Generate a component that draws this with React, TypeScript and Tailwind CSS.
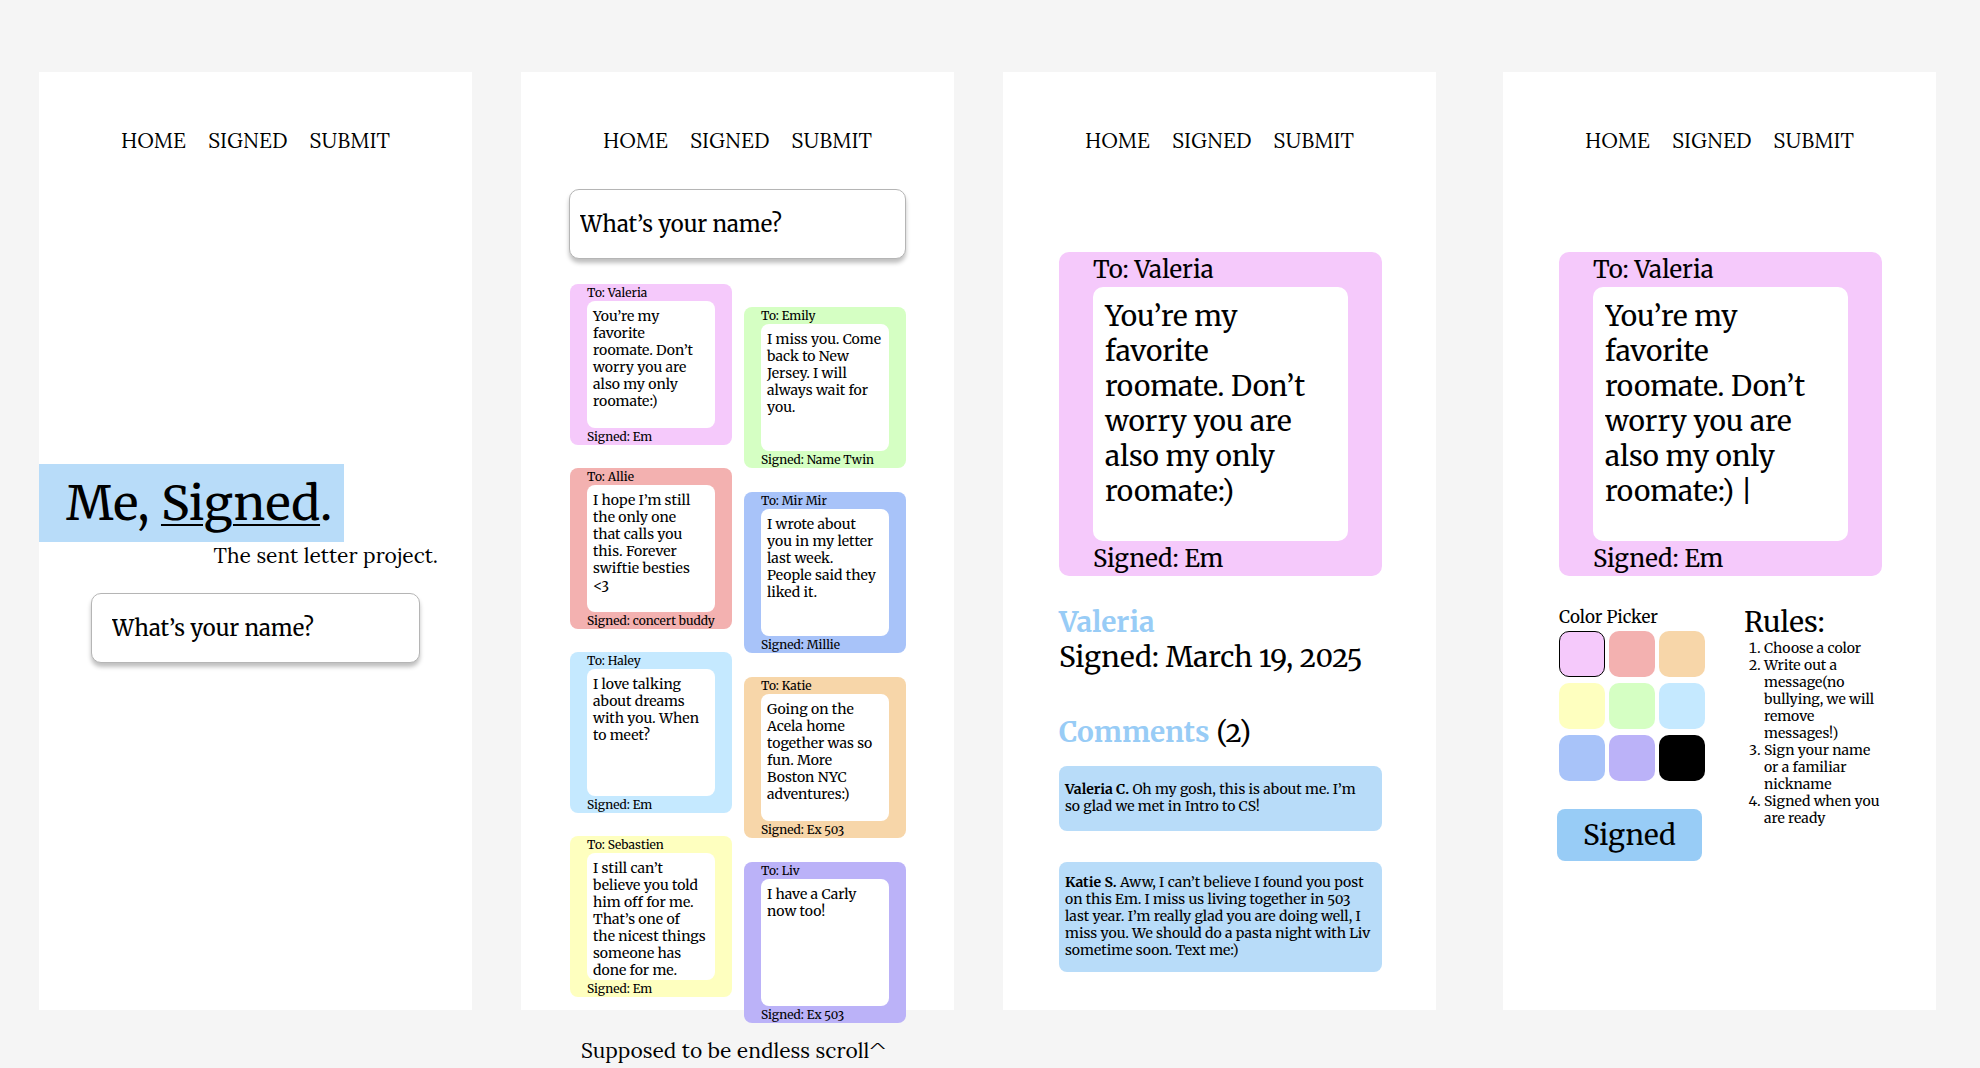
import { useState } from "react";
import type { ReactNode } from "react";

const inks = {
  pink: "bg-[#f5c9fb]",
  red: "bg-[#f3b1b0]",
  orange: "bg-[#f7d6a9]",
  yellow: "bg-[#feffbf]",
  green: "bg-[#d5ffc3]",
  sky: "bg-[#c5e9ff]",
  blue: "bg-[#a8c3f9]",
  purple: "bg-[#bbb2f8]",
  black: "bg-black",
};

type Ink = keyof typeof inks;
type Letter = { ink: Ink; to: string; from: string; text: string };

const leftLetters: Letter[] = [
  { ink: "pink", to: "Valeria", from: "Em", text: "You’re my\nfavorite\nroomate. Don’t\nworry you are\nalso my only\nroomate:)" },
  { ink: "red", to: "Allie", from: "concert buddy", text: "I hope I’m still\nthe only one\nthat calls you\nthis. Forever\nswiftie besties\n<3" },
  { ink: "sky", to: "Haley", from: "Em", text: "I love talking\nabout dreams\nwith you. When\nto meet?" },
  { ink: "yellow", to: "Sebastien", from: "Em", text: "I still can’t\nbelieve you told\nhim off for me.\nThat’s one of\nthe nicest things\nsomeone has\ndone for me." },
];

const rightLetters: Letter[] = [
  { ink: "green", to: "Emily", from: "Name Twin", text: "I miss you. Come\nback to New\nJersey. I will\nalways wait for\nyou." },
  { ink: "blue", to: "Mir Mir", from: "Millie", text: "I wrote about\nyou in my letter\nlast week.\nPeople said they\nliked it." },
  { ink: "orange", to: "Katie", from: "Ex 503", text: "Going on the\nAcela home\ntogether was so\nfun. More\nBoston NYC\nadventures:)" },
  { ink: "purple", to: "Liv", from: "Ex 503", text: "I have a Carly\nnow too!" },
];

const favorite = leftLetters[0].text;

const rules = [
  "Choose a color",
  "Write out a\nmessage(no\nbullying, we will\nremove\nmessages!)",
  "Sign your name\nor a familiar\nnickname",
  "Signed when you\nare ready",
];

function Screen({ children }: { children: ReactNode }) {
  return (
    <section className="flex min-h-[938px] flex-col bg-white pt-[55px]">
      <nav className="flex justify-center gap-[22px] font-['Lora','Liberation_Serif',serif] text-[21px] leading-7">
        <a href="#home">HOME</a>
        <a href="#signed">SIGNED</a>
        <a href="#submit">SUBMIT</a>
      </nav>
      {children}
    </section>
  );
}

function NameInput({ pad }: { pad: string }) {
  return (
    <input
      type="text"
      aria-label="What’s your name?"
      placeholder="What’s your name?"
      className={`h-[70px] w-full rounded-[10px] border border-[#b5b5b5] bg-white text-[22px] shadow-[0_4px_4px_rgba(0,0,0,0.25)] placeholder:text-black placeholder:opacity-100 ${pad}`}
    />
  );
}

function SmallLetter({ letter }: { letter: Letter }) {
  return (
    <article className={`rounded-lg px-[17px] text-[12px] leading-[17px] ${inks[letter.ink]}`}>
      <h3 className="whitespace-nowrap">To: {letter.to}</h3>
      <p className="min-h-[127px] rounded-lg bg-white px-1.5 pt-[7px] text-[14px] leading-[17px] whitespace-pre">
        {letter.text}
      </p>
      <p className="whitespace-nowrap">Signed: {letter.from}</p>
    </article>
  );
}

function BigLetter({ ink, children }: { ink: Ink; children: ReactNode }) {
  return (
    <article className={`mt-[97px] rounded-[10px] px-[34px] text-[24px] leading-[35px] ${inks[ink]}`}>
      <h2>To: Valeria</h2>
      <div className="h-[254px] rounded-[10px] bg-white px-3 pt-3 text-[28px] leading-[35px] whitespace-pre">
        {children}
      </div>
      <p>Signed: Em</p>
    </article>
  );
}

export default function App() {
  const [ink, setInk] = useState<Ink>("pink");

  return (
    <main className="flex min-h-screen items-start gap-[49px] bg-[#f5f5f5] pt-[72px] pr-11 pl-[39px] font-['Merriweather','DejaVu_Serif_Condensed','DejaVu_Serif',serif] text-black oldstyle-nums">
      <div className="min-w-0 flex-1">
        <Screen>
          <h1 className="mt-[309px] self-start bg-[#b8dcf9] pr-3 pl-[27px] text-[48px] leading-[78px] whitespace-nowrap">
            Me, <span className="underline decoration-2 underline-offset-4">Signed</span>.
          </h1>
          <p className="pr-[34px] text-right font-['Lora','Liberation_Serif',serif] text-[21px] leading-7">
            The sent letter project.
          </p>
          <div className="mt-[23px] px-[52px]">
            <NameInput pad="px-5" />
          </div>
        </Screen>
      </div>

      <div className="min-w-0 flex-1">
        <Screen>
          <div className="px-12">
            <div className="mt-[34px]">
              <NameInput pad="px-2.5" />
            </div>
            <div className="mt-[25px] -mb-4 grid grid-cols-2 items-start gap-3 pl-px">
              <div className="flex flex-col gap-[23px]">
                {leftLetters.map((l) => (
                  <SmallLetter key={l.to} letter={l} />
                ))}
              </div>
              <div className="flex flex-col gap-6 pt-[23px]">
                {rightLetters.map((l) => (
                  <SmallLetter key={l.to} letter={l} />
                ))}
              </div>
            </div>
          </div>
        </Screen>
        <p className="mt-[27px] pl-[60px] font-['Lora','Liberation_Serif',serif] text-[21px] leading-7 whitespace-nowrap">
          Supposed to be endless scroll^
        </p>
      </div>

      <div className="min-w-0 flex-1">
        <Screen>
          <div className="pr-[54px] pl-14">
            <BigLetter ink="pink">{favorite}</BigLetter>
            <div className="mt-[29px] text-[28px] leading-[35px] whitespace-nowrap">
              <h2 className="font-bold text-[#98ccf6]">Valeria</h2>
              <p>Signed: March 19, 2025</p>
              <h3 className="mt-10">
                <span className="font-bold text-[#98ccf6]">Comments</span> (2)
              </h3>
            </div>
            <ul className="mt-4 flex flex-col gap-[31px] text-[14px] leading-[17px] whitespace-pre">
              <li className="flex min-h-[65px] items-center rounded-lg bg-[#b8dcf9] px-1.5 pb-0.5">
                <p>
                  <b>Valeria C.</b>
                  {" Oh my gosh, this is about me. I’m\nso glad we met in Intro to CS!"}
                </p>
              </li>
              <li className="flex min-h-[110px] items-center rounded-lg bg-[#b8dcf9] px-1.5 pb-0.5">
                <p>
                  <b>Katie S.</b>
                  {" Aww, I can’t believe I found you post\non this Em. I miss us living together in 503\nlast year. I’m really glad you are doing well, I\nmiss you. We should do a pasta night with Liv\nsometime soon. Text me:)"}
                </p>
              </li>
            </ul>
          </div>
        </Screen>
      </div>

      <div className="ml-[18px] min-w-0 flex-1">
        <Screen>
          <form className="pr-[54px] pl-14" onSubmit={(e) => e.preventDefault()}>
            <BigLetter ink={ink}>
              <textarea
                aria-label="Message"
                defaultValue={`${favorite} |`}
                className="block h-full w-full resize-none overflow-hidden outline-none"
              />
            </BigLetter>
            <div className="mt-[29px] flex justify-between">
              <div>
                <fieldset>
                  <legend className="text-[17px] leading-6">Color Picker</legend>
                  <div className="mt-0.5 grid w-fit grid-cols-3 gap-x-1 gap-y-1.5">
                    {(Object.keys(inks) as Ink[]).map((name) => (
                      <input
                        key={name}
                        type="radio"
                        name="ink"
                        aria-label={name}
                        checked={ink === name}
                        onChange={() => setInk(name)}
                        className={`size-[46px] appearance-none rounded-[10px] checked:border checked:border-black ${inks[name]}`}
                      />
                    ))}
                  </div>
                </fieldset>
                <button
                  type="submit"
                  className="mt-[28px] -ml-0.5 h-[52px] w-[145px] rounded-lg bg-[#98ccf6] text-[28px] leading-[35px]"
                >
                  Signed
                </button>
              </div>
              <div className="w-[138px]">
                <h2 className="text-[28px] leading-[35px]">Rules:</h2>
                <ol className="list-decimal pl-5 text-[14px] leading-[17px] whitespace-pre">
                  {rules.map((r) => (
                    <li key={r}>{r}</li>
                  ))}
                </ol>
              </div>
            </div>
          </form>
        </Screen>
      </div>
    </main>
  );
}
